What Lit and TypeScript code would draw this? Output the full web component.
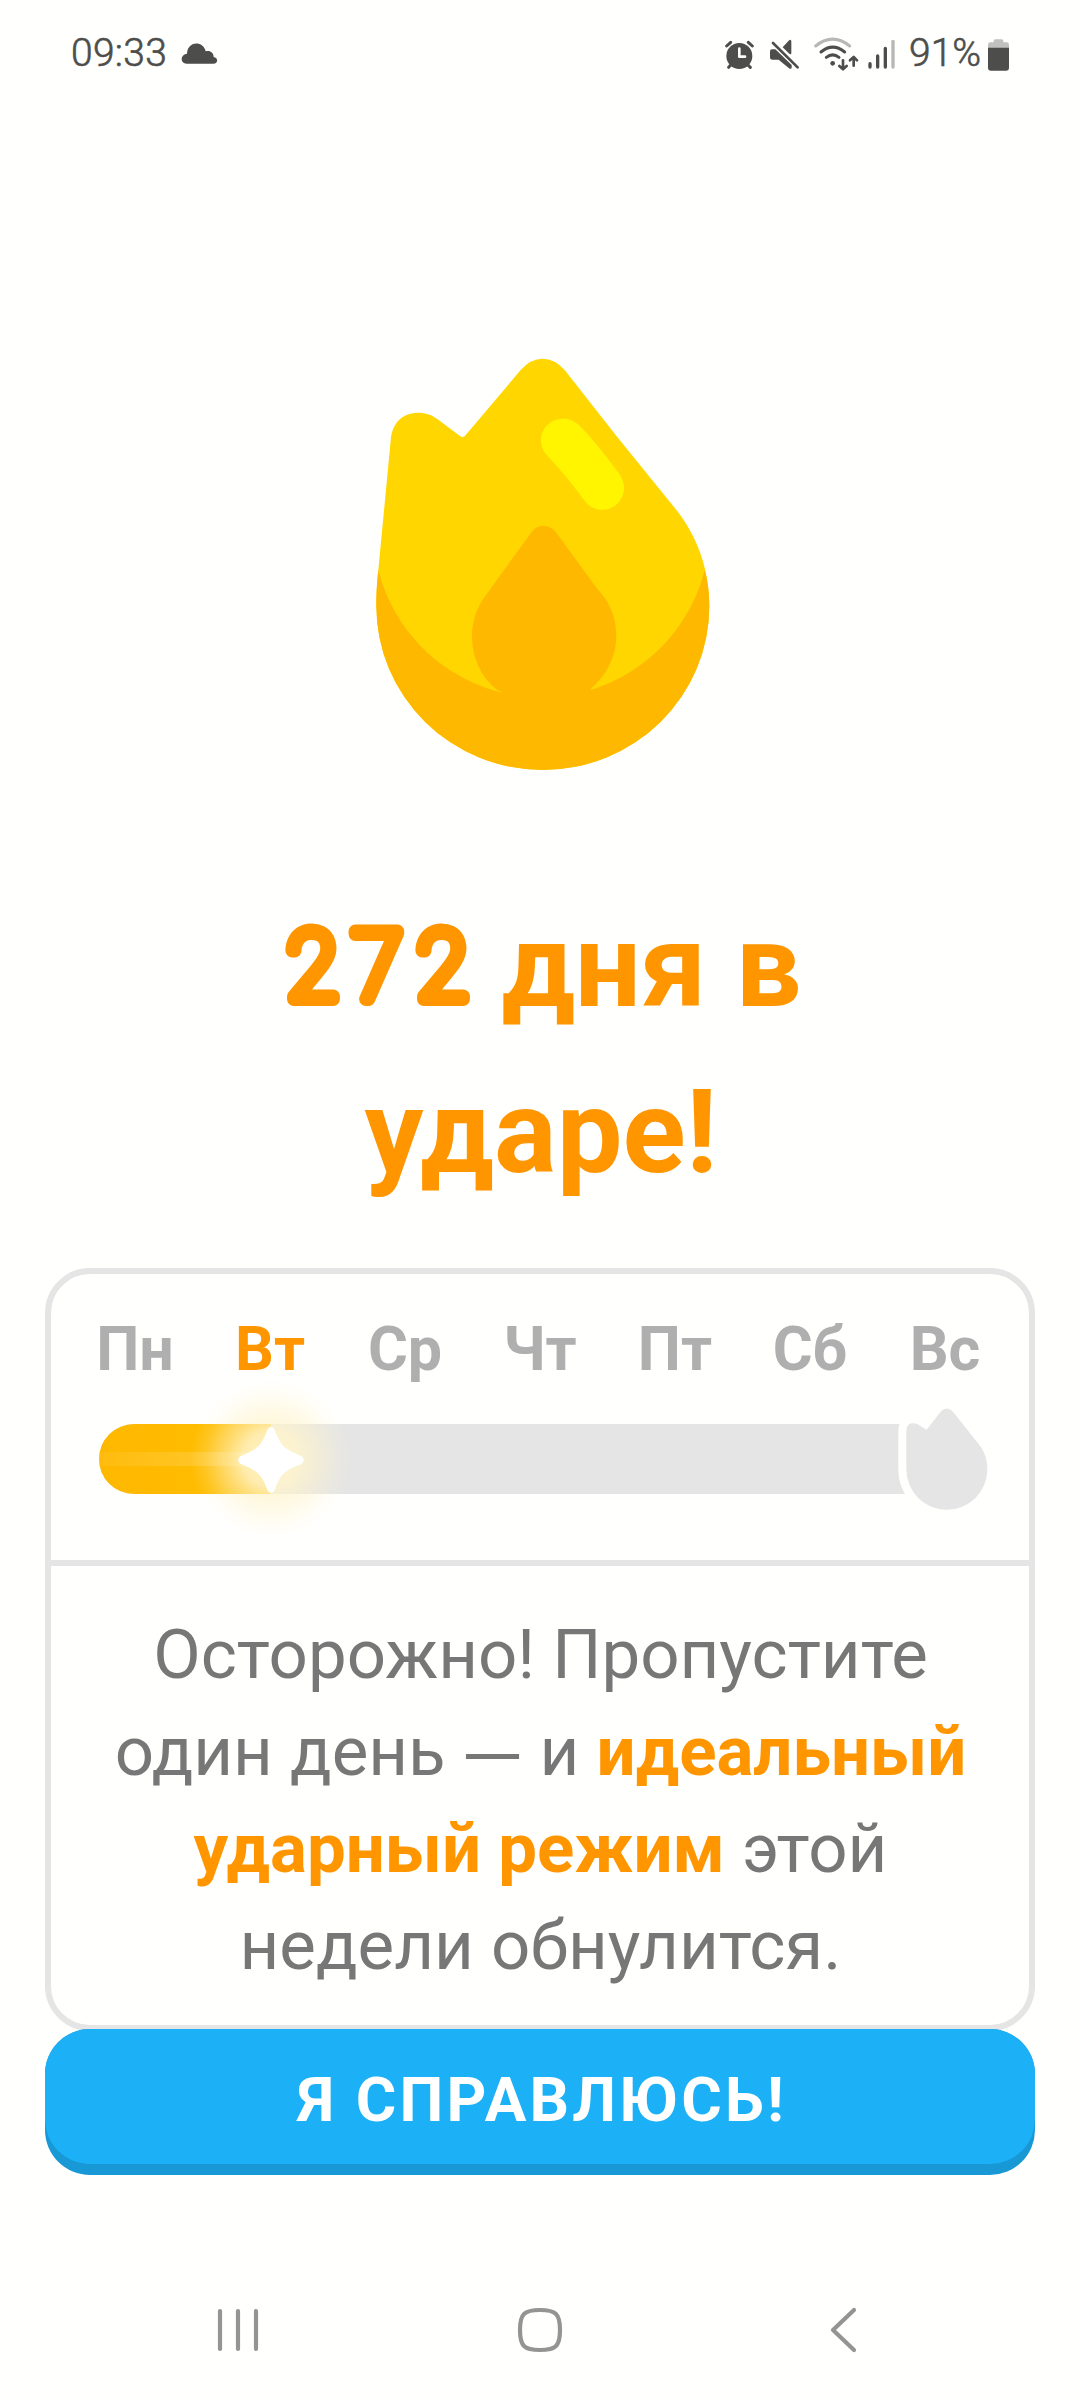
import { LitElement, html, css, svg } from "lit";
import { customElement, property } from "lit/decorators.js";

@customElement("status-bar")
class StatusBar extends LitElement {
  static styles = css`
    :host { display: block; }
    .bar { display: flex; align-items: center; height: 107px; padding: 0 70px 0 71px; color: #4d4d4b; font: 300 39px/109px Roboto, "Noto Sans", sans-serif; -webkit-text-stroke: 0.6px #4d4d4b; }
    .time { width: 110px; white-space: nowrap; letter-spacing: 0.3px; }
    .level { width: 78px; margin-left: 13px; white-space: nowrap; }
    .grow { flex: 1; }
    svg { display: block; height: 70px; fill: currentColor; }
    .line { fill: none; stroke: currentColor; stroke-linecap: round; stroke-linejoin: round; }
    .faint { stroke: #b7b7b6; }
    .faintfill { fill: #c0c0bf; }
    .cloud { width: 37px; }
    .alarm { width: 30px; margin-right: 15px; }
    .mute { width: 31px; margin-right: 13px; }
    .wifi { width: 46px; margin-right: 8px; }
    .signal { width: 29px; }
    .battery { width: 23px; }
  `;
  render() {
    return html`<div class="bar">
      <span class="time">09:33</span>
      <svg class="cloud" viewBox="393 -5 111 210"><path d="M410 129 C390 129 390 101 411 99 C413 60 460 60 467 92 C480 88 491 96 491 109 C505 111 505 129 490 129Z"/></svg>
      <span class="grow"></span>
      <svg class="alarm" viewBox="72 -5 90 210">
        <circle cx="118" cy="106" r="39"/>
        <path class="line" stroke-width="9" d="M80 76 L92 65 M157 76 L145 65 M94 131 L86 140 M142 131 L151 140"/>
        <path d="M118 84 V108 H135" fill="none" stroke="#fefefe" stroke-width="8" stroke-linecap="round" stroke-linejoin="round"/>
      </svg>
      <svg class="mute" viewBox="207 -5 93 210">
        <path d="M216 86 H226 L275 133 V141 Q273 147 267 143 L236 117 H217 Q210 117 210 109 V92 Q210 86 216 86Z M248 80 L266 60 Q273 54 274 62 V98 Q273 103 268 99Z"/>
        <path class="line" stroke-width="8" d="M219 67 L293 140"/>
      </svg>
      <svg class="wifi" viewBox="339 -5 138 210">
        <path class="line faint" stroke-width="9" d="M347 76 Q398 35 449 76"/>
        <path class="line" stroke-width="9" d="M363 94 Q398 65 434 94 M379 110 Q398 95 417 110"/>
        <circle cx="398" cy="128" r="7"/>
        <path class="line" stroke-width="8" d="M429 119 V144 M418 136 L429 146 L440 136 M461 135 V110 M450 119 L461 109 L471 119"/>
      </svg>
      <svg class="signal" viewBox="501 -5 87 210">
        <path class="line" stroke-width="10" d="M510 129 V139 M533 106 V139 M556 83 V139"/>
        <path class="line faint" stroke-width="10" d="M579 62 V139"/>
      </svg>
      <span class="level">91%</span>
      <svg class="battery" viewBox="861 -5 69 210">
        <path class="faintfill" d="M881 61 Q881 56 886 56 H905 Q910 56 910 61 V65 H920 Q927 65 927 72 V85 H864 V72 Q864 65 871 65 H881Z"/>
        <path d="M864 81 H927 V141 Q927 150 918 150 H873 Q864 150 864 141Z"/>
      </svg>
    </div>`;
  }
}

@customElement("streak-flame")
class StreakFlame extends LitElement {
  static styles = css`
    :host { display: block; }
    svg { display: block; width: 380px; height: 450px; margin-left: 350px; }
  `;
  render() {
    return html`<svg viewBox="0 0 1140 1350">
      <path fill="#ffd600" d="M122 302 C126 246 160 218 205 218 C228 218 246 225 262 237 L330 288 Q337 294 344 289 L512 90 Q542 56 578 56 Q614 56 644 90 L800 289 L975 505 C1040 585 1078 685 1078 798 A499.5 492 0 0 1 79 798 C79 750 82 720 85 690Z"/>
      <path fill="#ffb800" d="M85 691 A505 505 0 0 0 1064 691 Q1078 740 1078 798 A499.5 492 0 0 1 79 798 C79 750 82 720 85 691Z"/>
      <path fill="#ffb800" d="M545 576 Q560 557 580 557 Q602 557 618 577 L735 737 C752 760 799 800 799 888 C799 952 765 1010 725 1044 L700 1075 H480 L450 1054 C430 1044 366 990 366 888 C366 845 380 805 402 773Z"/>
      <path fill="#fff500" d="M595 350 C570 327 565 290 585 263 C612 228 660 228 690 258 Q745 315 808 402 C830 435 827 470 795 497 C765 518 728 512 705 484 Q650 408 595 350Z"/>
    </svg>`;
  }
}

@customElement("week-progress")
class WeekProgress extends LitElement {
  static styles = css`
    :host { display: block; }
    .week { padding: 40px 16.5px 66px; }
    .days { display: grid; grid-template-columns: repeat(7, 135px); text-align: center; font: 700 61px/70px Roboto, "Noto Sans", sans-serif; color: #afafaf; }
    .today { color: #ff9600; }
    .track { position: relative; width: 830px; height: 70px; margin: 40px 0 0 31.5px; border-radius: 35px 0 0 35px; background: #e5e5e5; }
    .fill { display: flex; align-items: center; height: 70px; border-radius: 35px 0 0 35px; background: linear-gradient(90deg, #ffb800, #ffbf00); overflow: hidden; }
    .shine { width: 100%; height: 14px; background: linear-gradient(90deg, rgba(255,255,255,.05), rgba(255,255,255,.22)); }
    .glow { position: absolute; top: -50px; width: 170px; height: 170px; margin-left: -85px;
      background: radial-gradient(circle, rgba(255,244,204,1) 0, rgba(255,244,204,.85) 28px, rgba(255,244,204,.62) 40px, rgba(255,244,204,.42) 52px, rgba(255,244,204,.17) 66px, rgba(255,244,204,0) 81px); }
    .star { position: absolute; top: 2px; width: 68px; height: 68px; margin-left: -34px; }
    .goal { position: absolute; top: -34px; right: -86px; width: 120px; height: 140px; overflow: visible; }
  `;
  @property({ type: Number }) current = 1;
  days = ["Пн", "Вт", "Ср", "Чт", "Пт", "Сб", "Вс"];
  render() {
    const x = this.current * 135 + 37;
    const flame = "M1099 515 C1099 490 1116 485 1133 493 L1160 509 L1202 455 Q1220 436 1239 455 L1318 555 C1337 580 1342 605 1342 628 A121.5 121.5 0 0 1 1099 628Z";
    return html`<div class="week">
      <div class="days">${this.days.map((d, i) => html`<span class=${i === this.current ? "today" : ""}>${d}</span>`)}</div>
      <div class="track">
        <div class="fill" style="width:${x}px"><div class="shine"></div></div>
        <div class="glow" style="left:${x}px"></div>
        <svg class="star" style="left:${x}px" viewBox="-102 -102 204 204"><path fill="#fff" d="M-10 -92 Q0 -106 10 -92 C30 -38 43 -32 91 -12 Q106 0 91 12 C43 32 30 38 10 92 Q0 106 -10 92 C-30 38 -43 32 -91 12 Q-106 0 -91 -12 C-43 -32 -30 -38 -10 -92Z"/></svg>
        <svg class="goal" viewBox="1065 390 360 420">
          ${svg`<path d=${flame} fill="#fffffe" stroke="#fffffe" stroke-width="48" stroke-linejoin="round"/><path d=${flame} fill="#e5e5e5"/>`}
        </svg>
      </div>
    </div>`;
  }
}

@customElement("app-root")
class AppRoot extends LitElement {
  static styles = css`
    :host { display: block; }
    .screen { display: flex; flex-direction: column; height: 2400px; background: #fffffe; font-family: Roboto, "Noto Sans", sans-serif; overflow: hidden; }
    streak-flame { margin-top: 233px; }
    .title { margin: 93px 0 0; padding-left: 2px; text-align: center; font-size: 117px; line-height: 166px; font-weight: 700; color: #ff9600; }
    .count { width: 187px; height: 84px; margin-left: 5px; overflow: visible; vertical-align: baseline; }
    .digits { font: 100 94px Roboto, sans-serif; fill: #ff9600; stroke: #ff9600; stroke-width: 14px; stroke-linejoin: round; stroke-linecap: round; }
    .card { margin: 53px 45px 0; border: 6px solid #e5e5e5; border-radius: 45px; }
    .warning { margin: 0; padding: 40px 0 31px 1px; border-top: 6px solid #e5e5e5; text-align: center; font-size: 69px; line-height: 97px; color: #777; }
    .dash { display: inline-block; margin: 0 3px; transform: translate(-1px, 6px) scaleX(1.18); }
    .accent { color: #ff9600; font-weight: 700; }
    .action { position: relative; margin: -2px 45px 0; padding: 0 0 11px; border: 0; border-radius: 45px; background: #1899d6; }
    .face { display: block; height: 135px; border-radius: 45px; background: #1cb0f6; color: #fff; text-align: center; font: 700 62px/142px Roboto, "Noto Sans", sans-serif; letter-spacing: 3.2px; text-indent: 4px; }
    .nav { display: block; margin-top: 105px; width: 1080px; height: 110px; fill: none; stroke: #949493; stroke-width: 4.2; stroke-linecap: round; stroke-linejoin: round; }
  `;
  render() {
    return html`<div class="screen">
      <status-bar></status-bar>
      <streak-flame></streak-flame>
      <h1 class="title"><svg class="count" viewBox="0 0 187 84"><text class="digits" transform="translate(2 77) scale(.98 1)" x="0 66.3 132.6">272</text></svg> дня в<br>ударе!</h1>
      <section class="card">
        <week-progress .current=${1}></week-progress>
        <p class="warning">Осторожно! Пропустите<br>один день <span class="dash">—</span> и <span class="accent">идеальный<br>ударный режим</span> этой<br>недели обнулится.</p>
      </section>
      <button class="action"><span class="face">Я СПРАВЛЮСЬ!</span></button>
      <svg class="nav" viewBox="0 2280 1080 110">
        <path d="M220 2311 V2349 M238 2311 V2349 M256 2311 V2349"/>
        <path d="M540 2310 C556 2310 560 2314 560 2330 C560 2346 556 2350 540 2350 C524 2350 520 2346 520 2330 C520 2314 524 2310 540 2310Z"/>
        <path d="M854 2310 L833 2330 L854 2350"/>
      </svg>
    </div>`;
  }
}
